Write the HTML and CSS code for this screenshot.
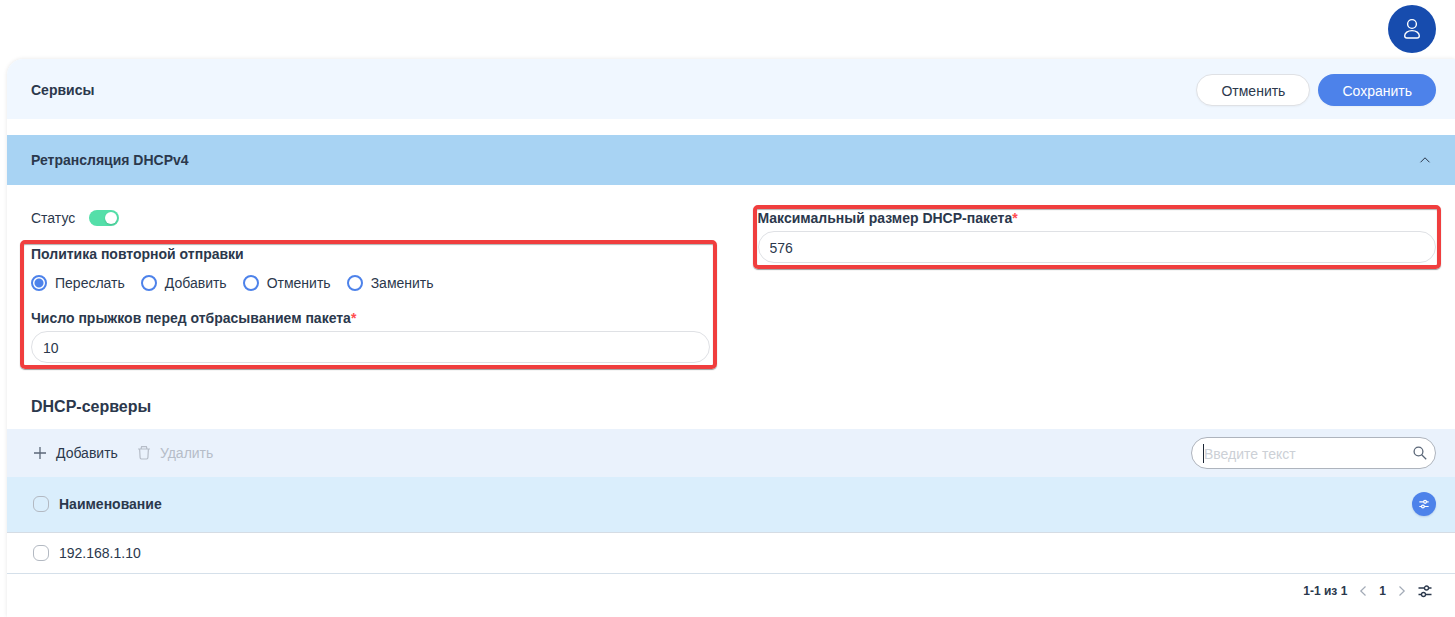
FILE: index.html
```html
<!DOCTYPE html>
<html lang="ru">
<head>
<meta charset="utf-8">
<meta name="viewport" content="width=device-width, initial-scale=1">
<title>Ретрансляция DHCPv4</title>
<link rel="stylesheet" href="styles.css">
</head>
<body>
<header class="topbar">
  <button class="avatar" type="button" aria-label="Профиль">
    <svg width="24" height="24" viewBox="0 0 24 24" fill="none" stroke="currentColor" stroke-width="1.4">
      <circle cx="12" cy="7" r="4.4"/>
      <path d="M12 13.600c-4.200 0-7.300 2.300-7.300 5.200 0 1.500.8 2.200 2.200 2.200h10.200c1.400 0 2.200-.7 2.200-2.200 0-2.900-3.100-5.200-7.300-5.200z"/>
    </svg>
  </button>
</header>
<main class="panel">
  <div class="page-head">
    <h1 class="page-title">Сервисы</h1>
    <div class="actions">
      <button class="btn" type="button">Отменить</button>
      <button class="btn btn-primary" type="button">Сохранить</button>
    </div>
  </div>

  <button class="section-head" type="button" aria-expanded="true">
    <span>Ретрансляция DHCPv4</span>
    <svg width="12" height="12" viewBox="0 0 12 12" fill="none" stroke="currentColor" stroke-width="1"><path d="M1.500 8.300 6 3.800l4.500 4.500"/></svg>
  </button>

  <form class="settings">
    <div class="column">
      <label class="status">Статус
        <input class="switch" type="checkbox" role="switch" checked>
      </label>
      <div class="framed framed-policy">
        <fieldset class="policy">
          <legend class="label">Политика повторной отправки</legend>
          <div class="options">
            <label class="option"><input class="radio" type="radio" name="policy" checked>Переслать</label>
            <label class="option"><input class="radio" type="radio" name="policy">Добавить</label>
            <label class="option"><input class="radio" type="radio" name="policy">Отменить</label>
            <label class="option"><input class="radio" type="radio" name="policy">Заменить</label>
          </div>
        </fieldset>
        <label class="label" for="hops">Число прыжков перед отбрасыванием пакета<span class="required">*</span></label>
        <input class="field" id="hops" type="text" value="10">
      </div>
    </div>
    <div class="column">
      <div class="framed framed-size">
        <label class="label" for="size">Максимальный размер DHCP-пакета<span class="required">*</span></label>
        <input class="field" id="size" type="text" value="576">
      </div>
    </div>
  </form>

  <section>
    <h2 class="table-title">DHCP-серверы</h2>
    <div class="toolbar">
      <button class="tool" type="button">
        <svg width="18" height="18" viewBox="0 0 18 18" fill="none" stroke="#5b6778" stroke-width="1.300"><path d="M9 3v12M3 9h12"/></svg>
        Добавить
      </button>
      <button class="tool" type="button" disabled>
        <svg width="18" height="18" viewBox="0 0 18 18" fill="none" stroke="currentColor" stroke-width="1.200"><path d="M3 5h12M6 5l.6-2.400h4.800L12 5M4.600 5l.5 8.600c0 .8.500 1.400 1.300 1.400h5.200c.8 0 1.300-.6 1.300-1.400l.5-8.600"/></svg>
        Удалить
      </button>
      <div class="search">
        <input class="search-input" type="text" placeholder="Введите текст" aria-label="Поиск">
        <span class="caret"></span>
        <svg width="16" height="16" viewBox="0 0 16 16" fill="none" stroke="#5b6778" stroke-width="1.300"><circle cx="6.500" cy="6.500" r="4.400"/><path d="m9.700 9.700 4.500 4.500"/></svg>
      </div>
    </div>
    <table class="grid">
      <thead>
        <tr>
          <th class="cell-check"><input class="check" type="checkbox" aria-label="Выбрать все"></th>
          <th>Наименование</th>
          <th class="cell-tools">
            <button class="columns" type="button" aria-label="Настройка столбцов">
              <svg width="10" height="10" viewBox="0 0 14 14" fill="none" stroke="currentColor" stroke-width="1.700"><path d="M.5 4H6.500M10.500 4h3M.5 10.500h3M7.500 10.500h6"/><circle cx="8.500" cy="4" r="2"/><circle cx="5.500" cy="10.500" r="2"/></svg>
            </button>
          </th>
        </tr>
      </thead>
      <tbody>
        <tr>
          <td class="cell-check"><input class="check" type="checkbox" aria-label="Выбрать 192.168.1.10"></td>
          <td>192.168.1.10</td>
          <td></td>
        </tr>
      </tbody>
    </table>
    <nav class="pager" aria-label="Страницы">
      <span>1-1 из 1</span>
      <button class="page-btn arrow" type="button" aria-label="Назад"><svg width="10" height="12" viewBox="0 0 10 12" fill="none" stroke="currentColor" stroke-width="1.200"><path d="M7.500 1.500 2.800 6l4.700 4.500"/></svg></button>
      <button class="page-btn" type="button">1</button>
      <button class="page-btn arrow" type="button" aria-label="Вперёд"><svg width="10" height="12" viewBox="0 0 10 12" fill="none" stroke="currentColor" stroke-width="1.200"><path d="M2.500 1.500 7.200 6l-4.700 4.500"/></svg></button>
      <button class="page-btn" type="button" aria-label="Настройки"><svg width="14" height="14" viewBox="0 0 14 14" fill="none" stroke="currentColor" stroke-width="1.300"><path d="M.5 4H6.500M10.500 4h3M.5 10.500h3M7.500 10.500h6"/><circle cx="8.500" cy="4" r="2"/><circle cx="5.500" cy="10.500" r="2"/></svg></button>
    </nav>
  </section>
</main>
</body>
</html>
```
FILE: styles.css
```css
* { box-sizing: border-box; }

body {
  margin: 0;
  background: #fff;
  color: #2b384c;
  font: 14px/20px "Liberation Sans", Arial, sans-serif;
}

button, input { font: inherit; color: inherit; margin: 0; }
button { border: 0; padding: 0; background: none; }
svg { display: block; flex: none; }

.topbar {
  display: flex;
  justify-content: flex-end;
  padding: 5px 19px 6px;
}

.avatar {
  display: grid;
  place-items: center;
  width: 48px;
  height: 48px;
  border-radius: 50%;
  background: #174cae;
  color: #fff;
}

.panel {
  margin-left: 7px;
  min-height: calc(100vh - 59px);
  border-radius: 16px 0 0 0;
  box-shadow: 0 0 4px rgba(0, 0, 0, 0.1);
  background: #fff;
}

.page-head {
  display: flex;
  align-items: center;
  justify-content: space-between;
  height: 60px;
  padding: 2px 19px 0 24px;
  border-radius: 16px 0 0 0;
  background: #f0f7ff;
}

.page-title { margin: 0; font-size: 14px; }
.actions { display: flex; gap: 8px; }

.btn {
  height: 32px;
  padding: 2px 24px 0;
  border: 1px solid #dfe1e5;
  border-radius: 16px;
  background: #fff;
  box-shadow: 0 1px 2px rgba(0, 0, 0, 0.04);
}

.btn-primary { border: 0; background: #4d82ea; color: #fff; }

.section-head {
  display: flex;
  align-items: center;
  justify-content: space-between;
  width: 100%;
  height: 50px;
  margin-top: 16px;
  padding: 0 24px;
  background: #a8d3f3;
  font-weight: bold;
}

.settings {
  display: grid;
  grid-template-columns: 1fr 1fr;
  gap: 48px;
  padding: 22px 19px 0 24px;
}

.status {
  display: flex;
  align-items: center;
  gap: 14px;
  height: 22px;
}

.switch {
  appearance: none;
  display: flex;
  align-items: center;
  justify-content: flex-end;
  width: 30px;
  height: 16px;
  padding: 2px;
  border-radius: 8px;
  background: #54dfa9;
}

.switch::before {
  content: "";
  width: 12px;
  height: 12px;
  border-radius: 50%;
  background: #fff;
  box-shadow: 0 1px 2px rgba(0, 60, 30, 0.2);
}

.framed { position: relative; }
.framed-policy { margin-top: 14px; }

/* Highlight frames lie over the form without affecting its flow */
.framed::before {
  content: "";
  position: absolute;
  inset: -3px -7px -6px -11px;
  border: 4px solid #f03e3e;
  border-radius: 5px;
  box-shadow: 0 1px 1px rgba(60, 60, 60, 0.5), inset 0 1px 1px rgba(60, 60, 60, 0.4);
  pointer-events: none;
}

.framed-size::before { inset: -2px -5px -6px; }

.policy { margin: 0; padding: 0; border: 0; }
.label { display: block; padding: 0; font-weight: bold; line-height: 22px; }
.required { color: #ff4d4f; }

.options {
  display: flex;
  gap: 16px;
  padding: 8px 0 14px;
}

.option { display: flex; align-items: center; gap: 8px; }

.radio {
  appearance: none;
  flex: none;
  width: 16px;
  height: 16px;
  border: 2px solid #4d82ea;
  border-radius: 50%;
  background: #fff;
}

.radio:checked { background: radial-gradient(circle, #4d82ea 4px, #fff 5px); }

.field {
  display: block;
  width: 100%;
  height: 32px;
  margin-top: 2px;
  padding: 2px 11px 0;
  border: 1px solid #dfe1e5;
  border-radius: 16px;
  background: #fff;
}

.table-title {
  margin: 32px 0 10px 24px;
  font-size: 16px;
  line-height: 24px;
}

.toolbar {
  display: flex;
  align-items: center;
  gap: 17px;
  height: 48px;
  padding: 0 19px 0 24px;
  background: #eaf2fc;
}

.tool { display: flex; align-items: center; gap: 7px; }
.tool:disabled { color: #b6bdc8; }

.search {
  position: relative;
  display: flex;
  align-items: center;
  width: 245px;
  height: 32px;
  margin-left: auto;
  padding: 0 7px 0 12px;
  border: 1px solid #aeb4bd;
  border-radius: 16px;
  background: #fff;
}

.search-input {
  flex: 1;
  min-width: 0;
  padding: 2px 0 0;
  border: 0;
  outline: 0;
  background: transparent;
}

.search-input::placeholder { color: #ccd0d6; opacity: 1; }

.caret {
  position: absolute;
  left: 11px;
  top: 6px;
  width: 1px;
  height: 19px;
  background: #1c2635;
}

.grid { width: 100%; border-collapse: collapse; }
.grid th, .grid td { padding: 0; text-align: left; }
.grid thead { background: #daeefc; }
.grid th { height: 55px; border-bottom: 1px solid #d5dce4; }
.grid td { height: 41px; border-bottom: 1px solid #d5e0ea; }
.grid .cell-check { width: 52px; padding-left: 26px; }
.grid .cell-tools { width: 43px; }

.check {
  appearance: none;
  display: block;
  width: 16px;
  height: 16px;
  border: 1px solid #b3b9c2;
  border-radius: 6px;
}

.columns {
  display: grid;
  place-items: center;
  width: 24px;
  height: 24px;
  border-radius: 50%;
  background: #4d82ea;
  color: #fff;
  box-shadow: 0 1px 2px rgba(0, 40, 120, 0.15);
}

.pager {
  display: flex;
  align-items: center;
  justify-content: flex-end;
  gap: 11px;
  padding: 7px 23px 0 24px;
  font-size: 12px;
  font-weight: bold;
}

.arrow { color: #a3abb7; }
```
